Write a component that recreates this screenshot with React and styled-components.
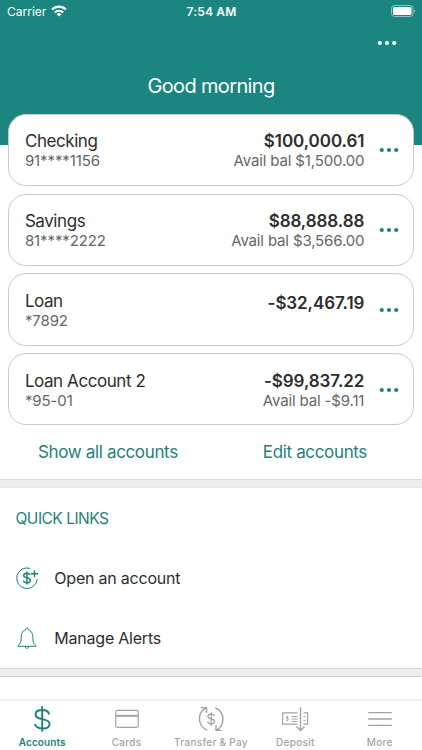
import React from "react";
import styled, { createGlobalStyle } from "styled-components";

const TEAL = "#1b857f";
const LINK = "#1f807b";
const GREY = "#a3a3a3";

const GlobalStyle = createGlobalStyle`
  * {
    box-sizing: border-box;
  }
  body {
    margin: 0;
    background: #fff;
    font-family: Inter, "Liberation Sans", sans-serif;
  }
  svg {
    display: block;
    fill: none;
    stroke: currentColor;
  }
  button {
    border: 0;
    padding: 0;
    background: none;
    font: inherit;
    color: inherit;
  }
`;

const Screen = styled.div`
  display: flex;
  flex-direction: column;
  width: 422px;
  height: 750px;
  overflow: hidden;
`;

const Content = styled.main`
  flex: 1;
  min-height: 0;
  overflow: hidden;
`;

const Header = styled.header`
  height: 145px;
  background: ${TEAL};
  color: #fff;
`;

const StatusBar = styled.div`
  display: grid;
  grid-template-columns: 1fr auto 1fr;
  align-items: center;
  height: 22px;
  padding: 0 6px 0 7px;
  font-size: 12px;
`;

const Carrier = styled.div`
  display: flex;
  align-items: center;
  gap: 5px;
`;

const Clock = styled.div`
  font-weight: 600;
  letter-spacing: 0.2px;
`;

const BatterySlot = styled.div`
  justify-self: end;
`;

const HeaderActions = styled.div`
  display: flex;
  justify-content: flex-end;
  align-items: center;
  height: 42px;
  padding-right: 25px;
`;

const Greeting = styled.h1`
  margin: 9px 0 0;
  font-size: 20px;
  line-height: 26px;
  font-weight: 400;
  letter-spacing: -0.65px;
  text-align: center;
`;

const AccountList = styled.section`
  display: flex;
  flex-direction: column;
  gap: 7.6px;
  margin-top: -31.2px;
  padding: 0 8.4px;
`;

const Card = styled.article`
  display: flex;
  height: 72.2px;
  padding: 17.5px 14px 0 15.5px;
  border: 1px solid #cacaca;
  border-radius: 18px;
  background: #fff;
  color: #2d2d2d;
`;

const Details = styled.div`
  flex: 1;
`;

const Balance = styled.div`
  padding-top: ${props => (props.$single ? "2px" : 0)};
  text-align: right;
`;

const Name = styled.div`
  font-size: 17px;
  line-height: 19px;
  letter-spacing: -0.43px;
`;

const Amount = styled(Name)`
  font-weight: 600;
  letter-spacing: -0.08px;
`;

const Sub = styled.div`
  color: #666;
  font-size: 15px;
  line-height: 19px;
  letter-spacing: -0.1px;
`;

const Available = styled(Sub)`
  letter-spacing: -0.15px;
`;

const CardMenu = styled.button`
  display: flex;
  align-items: center;
  height: 36px;
  margin-left: 14.3px;
  color: ${LINK};
`;

const AccountActions = styled.div`
  display: flex;
  justify-content: space-between;
  height: 54px;
  padding: 15px 55px 0 38px;
  color: ${LINK};
  font-size: 17px;
  line-height: 24px;
`;

const TextButton = styled.button`
  height: 24px;
  letter-spacing: -0.35px;
`;

const Separator = styled.div`
  height: 9px;
  background: #ededed;
  border-top: 1px solid #d6d6d6;
  border-bottom: 1px solid ${props => (props.$dark ? "#d0d0d0" : "#e6e6e6")};
`;

const QuickLinks = styled.section`
  height: 180px;
  padding-top: 19px;
`;

const SectionTitle = styled.h2`
  margin: 0 0 11px 15.5px;
  color: ${LINK};
  font-size: 15.5px;
  line-height: 24px;
  font-weight: 400;
  letter-spacing: -0.5px;
`;

const LinkRow = styled.div`
  display: flex;
  align-items: center;
  gap: 14.3px;
  height: 60px;
  padding: 12px 0 0 14px;
  color: ${LINK};
`;

const LinkLabel = styled.span`
  color: #2d2d2d;
  font-size: 16px;
  letter-spacing: -0.22px;
`;

const TabBar = styled.nav`
  display: grid;
  grid-template-columns: repeat(5, 1fr);
  height: 51px;
  border-top: 2px solid #f1f1f1;
  background: #fff;
`;

const Tab = styled.div`
  display: flex;
  flex-direction: column;
  align-items: center;
  gap: 2px;
  padding-top: 4px;
  color: ${props => (props.$active ? LINK : GREY)};
  font-size: 10px;
  line-height: 14px;
  font-weight: ${props => (props.$active ? 600 : 500)};
  letter-spacing: ${props => (props.$active ? "0.1px" : "0.3px")};
  white-space: nowrap;
`;

const Dots = () => (
  <svg width="20" height="6" viewBox="0 0 20 6">
    <g fill="currentColor" stroke="none">
      <circle cx="2.8" cy="3" r="2.1" />
      <circle cx="10" cy="3" r="2.1" />
      <circle cx="17.2" cy="3" r="2.1" />
    </g>
  </svg>
);

const Wifi = () => (
  <svg width="16" height="12" viewBox="0 0 16 12" strokeWidth="2.1">
    <path d="M1.1 4.5a9.8 9.8 0 0 1 13.8 0" />
    <path d="M3.8 7.4a6 6 0 0 1 8.4 0" />
    <path d="M5.6 9.2a3.5 3.5 0 0 1 4.8 0L8 11.6z" fill="currentColor" stroke="none" />
  </svg>
);

const Battery = () => (
  <svg width="25" height="12" viewBox="0 0 25 12">
    <rect x=".5" y=".5" width="21.5" height="11" rx="3" opacity=".5" />
    <rect x="2" y="2" width="18.5" height="8" rx="1.5" fill="currentColor" stroke="none" />
    <path d="M23.3 4.3a2 2 0 0 1 0 3.4z" fill="currentColor" stroke="none" opacity=".6" />
  </svg>
);

const OpenAccountIcon = () => (
  <svg width="26" height="26" viewBox="0 0 26 26" strokeWidth="1">
    <path d="M16.2 3.4A10.3 10.3 0 1 0 23.3 14" />
    <path d="M16.1 10.1c-.4-1.1-1.5-1.8-3.2-1.8-1.9 0-3.2.8-3.2 2.2 0 1.5 1.3 1.9 3.2 2.3 2.1.4 3.4 1 3.4 2.6 0 1.5-1.4 2.4-3.4 2.4-1.9 0-3.2-.8-3.5-2.1M12.9 6.4v13.2" strokeWidth="1.4" />
    <path d="M20.5 5.2v7M17 8.7h7" strokeWidth="1.4" />
  </svg>
);

const BellIcon = () => (
  <svg width="26" height="26" viewBox="0 0 26 26" strokeWidth="1">
    <path d="M4 20.4c2.7-1.6 3-3.5 3.1-6.6.1-4.2.8-8 4.4-8.8V4.6c0-2 3-2 3 0V5c3.6.8 4.3 4.6 4.4 8.8.1 3.1.4 5 3.1 6.6.5.4.3.9-.3.9H4.3c-.6 0-.8-.5-.3-.9z" />
    <path d="M11.2 21.5c.1 2.4 3.5 2.4 3.6 0" />
  </svg>
);

const DollarIcon = () => (
  <svg width="26" height="28" viewBox="0 0 26 28" strokeWidth="1.9">
    <path d="M20.1 9.5c-.5-3-3-4.5-6.8-4.5-4 0-6.8 1.7-6.8 4.5 0 3.2 3.2 3.8 6.9 4.6 4.2.8 7.2 1.7 7.2 4.8 0 2.9-2.9 4.6-7.2 4.6-4.2 0-6.9-1.6-7.4-4.6M13.2 1.3v25.2" />
  </svg>
);

const CardIcon = () => (
  <svg width="26" height="28" viewBox="0 0 26 28" strokeWidth="1.2">
    <rect x="1.8" y="5.4" width="22.4" height="17" rx="1.8" />
    <path d="M2 10.8h22" strokeWidth="2" />
  </svg>
);

const TransferIcon = () => (
  <svg width="28" height="28" viewBox="0 0 28 28" strokeWidth="1.4">
    <path d="M10.3 25.1C.8 21.3-.7 8.1 9.2 2.7M3.8 2.6h5.7v5.3" />
    <path d="M18.3 2.9c9.5 3.8 10.5 16.8 1 22.4M24.7 25.4H19V20" />
    <path d="M17.4 11c-.4-1.2-1.6-1.8-3.3-1.8-1.9 0-3.2.8-3.2 2.3s1.3 1.9 3.3 2.3c2 .5 3.3 1.1 3.3 2.7 0 1.5-1.3 2.4-3.3 2.4-1.9 0-3.3-.8-3.6-2.2M14.2 7.2v13.6" strokeWidth="1.3" />
  </svg>
);

const DepositIcon = () => (
  <svg width="28" height="28" viewBox="0 0 28 28" strokeWidth="1.2">
    <path d="M16.4 7.8H1.6v11.4h14.8M22.6 7.8h4v11.4h-4" />
    <path d="M10.5 11.5h6M10.5 14h6M10.5 16.5h6M22.5 11.5h1.8M22.5 15.5h1.8" />
    <path d="M7.6 12c-.8-.7-2.6-.5-2.6.5 0 1.4 2.7.6 2.7 2 0 1.1-2 1.2-2.8.4M6.3 10.8v5.4" strokeWidth=".8" />
    <path d="M19.5 2.3v23M15.4 21.5l4.1 4 4.1-4" strokeWidth="1.4" />
  </svg>
);

const MenuIcon = () => (
  <svg width="26" height="28" viewBox="0 0 26 28" strokeWidth="1.3">
    <path d="M1.2 7.6h23.6M1.2 14h23.6M1.2 20.3h23.6" />
  </svg>
);

const accounts = [
  { name: "Checking", number: "91****1156", amount: "$100,000.61", avail: "Avail bal $1,500.00" },
  { name: "Savings", number: "81****2222", amount: "$88,888.88", avail: "Avail bal $3,566.00" },
  { name: "Loan", number: "*7892", amount: "-$32,467.19" },
  { name: "Loan Account 2", number: "*95-01", amount: "-$99,837.22", avail: "Avail bal -$9.11" }
];

const tabs = [
  { label: "Accounts", Icon: DollarIcon, active: true },
  { label: "Cards", Icon: CardIcon },
  { label: "Transfer & Pay", Icon: TransferIcon },
  { label: "Deposit", Icon: DepositIcon },
  { label: "More", Icon: MenuIcon }
];

const AccountCard = ({ name, number, amount, avail }) => (
  <Card>
    <Details>
      <Name>{name}</Name>
      <Sub>{number}</Sub>
    </Details>
    <Balance $single={!avail}>
      <Amount>{amount}</Amount>
      {avail && <Available>{avail}</Available>}
    </Balance>
    <CardMenu aria-label="Account options">
      <Dots />
    </CardMenu>
  </Card>
);

const App = () => (
  <Screen>
    <GlobalStyle />
    <Content>
      <Header>
        <StatusBar>
          <Carrier>
            Carrier <Wifi />
          </Carrier>
          <Clock>7:54 AM</Clock>
          <BatterySlot>
            <Battery />
          </BatterySlot>
        </StatusBar>
        <HeaderActions>
          <Dots />
        </HeaderActions>
        <Greeting>Good morning</Greeting>
      </Header>
      <AccountList>
        {accounts.map(account => (
          <AccountCard key={account.name} {...account} />
        ))}
      </AccountList>
      <AccountActions>
        <TextButton>Show all accounts</TextButton>
        <TextButton>Edit accounts</TextButton>
      </AccountActions>
      <Separator />
      <QuickLinks>
        <SectionTitle>QUICK LINKS</SectionTitle>
        <LinkRow>
          <OpenAccountIcon />
          <LinkLabel>Open an account</LinkLabel>
        </LinkRow>
        <LinkRow>
          <BellIcon />
          <LinkLabel>Manage Alerts</LinkLabel>
        </LinkRow>
      </QuickLinks>
      <Separator $dark />
    </Content>
    <TabBar>
      {tabs.map(({ label, Icon, active }) => (
        <Tab key={label} $active={active}>
          <Icon />
          {label}
        </Tab>
      ))}
    </TabBar>
  </Screen>
);

export default App;
